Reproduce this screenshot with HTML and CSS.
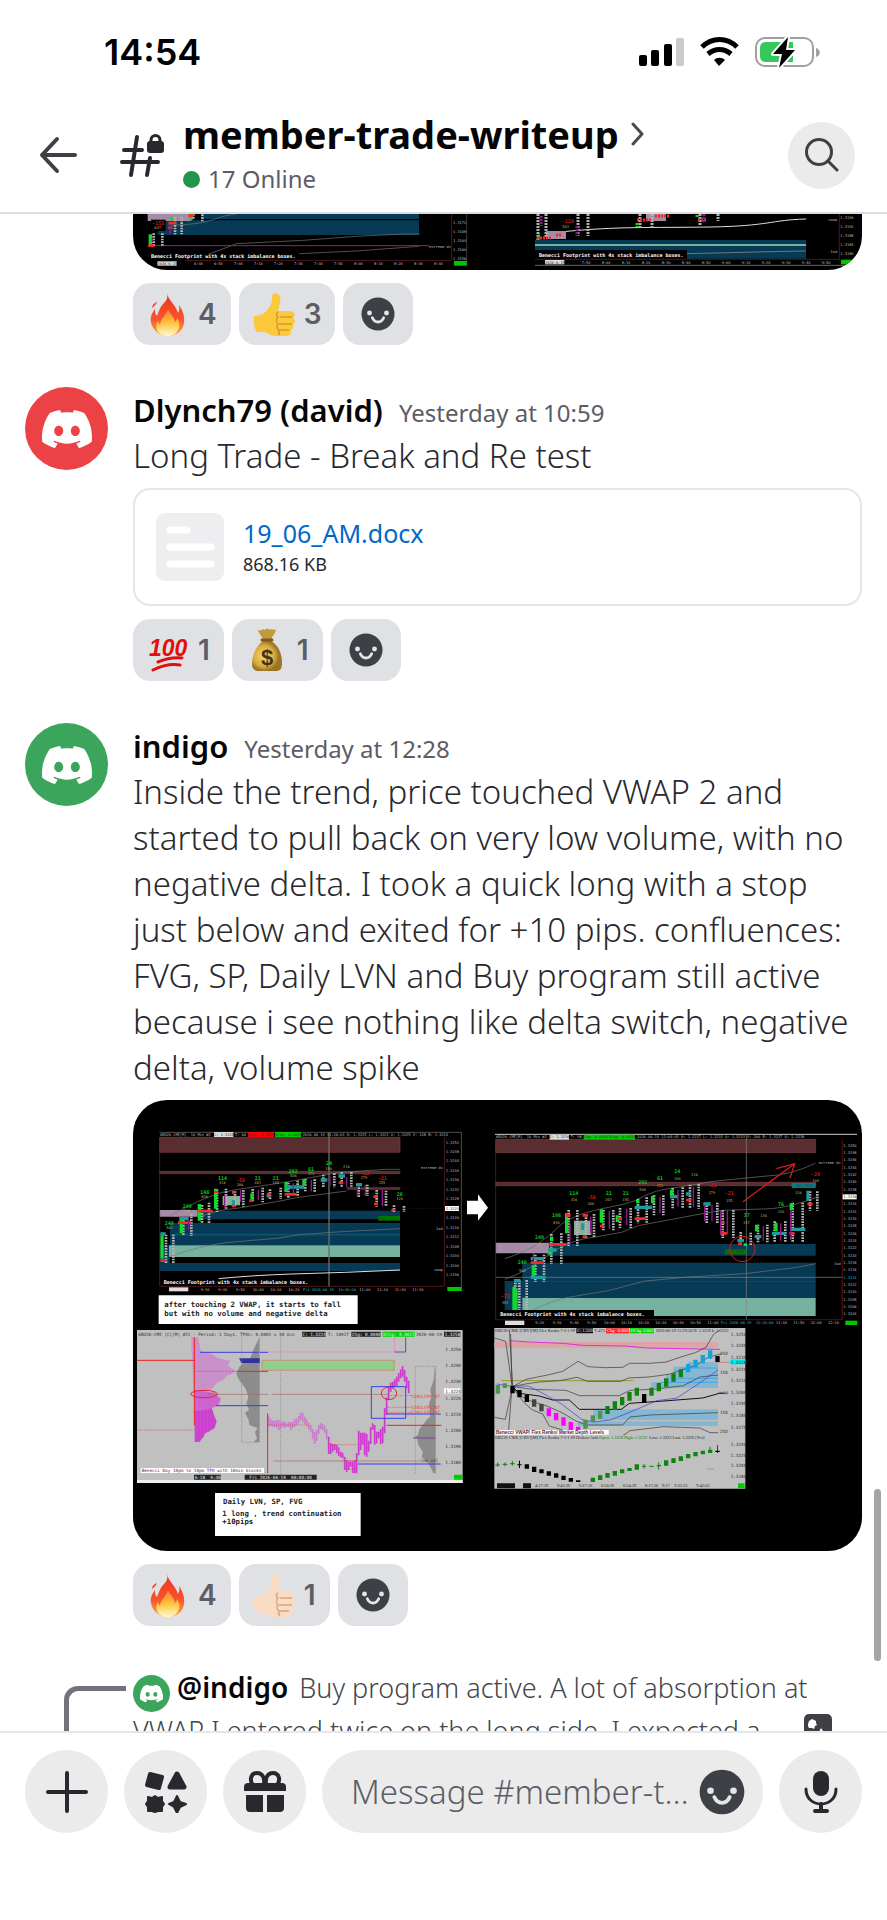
FILE: index.html
```html
<!DOCTYPE html>
<html lang="en">
<head>
    <meta charset="UTF-8">
    <meta name="viewport" content="width=device-width, initial-scale=1.0">
    <title>member-trade-writeup</title>
    <link rel="stylesheet" href="styles.css">
</head>
<body>
    <!-- shared icons -->
    <svg class="sprite" aria-hidden="true">
        <symbol id="discord" viewBox="0 0 24 24">
            <path fill="#fff" d="M20.317 4.3698a19.7913 19.7913 0 00-4.8851-1.5152.0741.0741 0 00-.0785.0371c-.211.3753-.4447.8648-.6083 1.2495-1.8447-.2762-3.68-.2762-5.4868 0-.1636-.3933-.4058-.8742-.6177-1.2495a.077.077 0 00-.0785-.037 19.7363 19.7363 0 00-4.8852 1.515.0699.0699 0 00-.0321.0277C.5334 9.0458-.319 13.5799.0992 18.0578a.0824.0824 0 00.0312.0561c2.0528 1.5076 4.0413 2.4228 5.9929 3.0294a.0777.0777 0 00.0842-.0276c.4616-.6304.8731-1.2952 1.226-1.9942a.076.076 0 00-.0416-.1057c-.6528-.2476-1.2743-.5495-1.8722-.8923a.077.077 0 01-.0076-.1277c.1258-.0943.2517-.1923.3718-.2914a.0743.0743 0 01.0776-.0105c3.9278 1.7933 8.18 1.7933 12.0614 0a.0739.0739 0 01.0785.0095c.1202.099.246.1981.3728.2924a.077.077 0 01-.0066.1276 12.2986 12.2986 0 01-1.873.8914.0766.0766 0 00-.0407.1067c.3604.698.7719 1.3628 1.225 1.9932a.076.076 0 00.0842.0286c1.961-.6067 3.9495-1.5219 6.0023-3.0294a.077.077 0 00.0313-.0552c.5004-5.177-.8382-9.6739-3.5485-13.6604a.061.061 0 00-.0312-.0286zM8.02 15.3312c-1.1825 0-2.1569-1.0857-2.1569-2.419 0-1.3332.9555-2.4189 2.157-2.4189 1.2108 0 2.1757 1.0952 2.1568 2.419 0 1.3332-.9555 2.4189-2.1569 2.4189zm7.9748 0c-1.1825 0-2.1569-1.0857-2.1569-2.419 0-1.3332.9554-2.4189 2.1569-2.4189 1.2108 0 2.1757 1.0952 2.1568 2.419 0 1.3332-.946 2.4189-2.1568 2.4189Z"/>
        </symbol>
        <symbol id="smile" viewBox="0 0 36 36">
            <circle cx="18" cy="18" r="17.5" fill="#3f4046"/>
            <circle cx="9" cy="17" r="2.6" fill="#e4e5e8"/>
            <circle cx="27" cy="17" r="2.6" fill="#e4e5e8"/>
            <path d="M12 22c2.500 6 9.500 6 12 0" fill="none" stroke="#e4e5e8" stroke-width="3" stroke-linecap="round"/>
        </symbol>
        <symbol id="fire" viewBox="0 0 42 44">
            <linearGradient id="flame" x1="0" y1="0" x2="0" y2="1">
                <stop offset="0" stop-color="#f1331f"/>
                <stop offset=".6" stop-color="#f9532c"/>
                <stop offset="1" stop-color="#fdae3d"/>
            </linearGradient>
            <linearGradient id="core" x1="0" y1="0" x2="0" y2="1">
                <stop offset="0" stop-color="#fb7a35"/>
                <stop offset=".5" stop-color="#ffc23b"/>
                <stop offset="1" stop-color="#fffbd0"/>
            </linearGradient>
            <path fill="url(#flame)" d="M20 1c1 7 9 12 11 20 1-2 2-4 1-8 4 6 6 12 5 18-1 8-8 13-16 13S5 38 4 30c-1-5 1-9 4-13 0 3 0 5 2 7 2-5 3-9 7-13 3-3 4-6 3-10z"/>
            <path fill="#f4452a" d="M5 16c0-3 2-5 5-6-1 3-3 4-5 6z"/>
            <path fill="url(#core)" d="M21 17c2 5 6 7 7 13 1-1 2-2 2-4 3 4 3 9 1 12-2 4-6 6-10 6-5 0-9-2-11-6-1-3-1-6 1-9 1 2 1 3 2 4 1-7 6-9 8-16z"/>
        </symbol>
        <symbol id="thumb" viewBox="0 0 42 44">
            <path fill="currentColor" d="M1 24c5 0 10-2 13-6 3-3 5-6 5-11 0-4 1-6 3-6 5 0 6 5 5 10l-2 8h12c5 0 6 5 3 7 3 2 2 5 0 6 1 3 0 5-2 6 1 3-1 6-4 6H22c-5 0-7-4-12-4H4c-3-4-4-11-3-16z"/>
            <path d="M27 25h12M26 32h13M26 38h10M25 20c-2 1-2 4 0 5-2 2-2 5 0 7-2 2-1 5 1 6-1 2 0 4 1 5" fill="none" stroke="#8a4b10" stroke-opacity=".35" stroke-width="1.500"/>
        </symbol>
    </svg>

    <header class="top">
        <div class="status">
            <span class="clock">14:54</span>
            <svg class="status-icons" viewBox="639 36 182 32" role="img" aria-label="Signal, Wi-Fi, battery charging">
                <rect x="639" y="55" width="8" height="11" rx="2"/>
                <rect x="651" y="50" width="8" height="16" rx="2"/>
                <rect x="664" y="44" width="8" height="22" rx="2"/>
                <rect x="676" y="38" width="8" height="28" rx="2" fill="#ccc"/>
                <g fill="none" stroke="#000" stroke-width="5">
                    <path d="M702 47c10-10 25-10 35 0"/>
                    <path d="M708 54c7-6 16-6 23 0"/>
                </g>
                <path d="M714 60c3-3 8-3 11 0l-6 6z"/>
                <rect x="756" y="38" width="57" height="28" rx="9" fill="none" stroke="#a0a0a0" stroke-width="2"/>
                <path d="M816 48c5 1 5 8 0 9z" fill="#a0a0a0"/>
                <path d="M766 42h27v20h-27q-6 0-6-6v-8q0-6 6-6z" fill="#34c759"/>
                <path d="M788 37l-15 17h9l-3 14 16-18h-9z" stroke="#fff" stroke-width="4" stroke-linejoin="round"/>
                <path d="M788 37l-15 17h9l-3 14 16-18h-9z"/>
            </svg>
        </div>
        <div class="channel-bar">
            <button class="back" aria-label="Back">
                <svg viewBox="0 0 40 40"><path d="M37 20H4M19 4L4 20l15 16" fill="none" stroke="#3f4046" stroke-width="4" stroke-linecap="round" stroke-linejoin="round"/></svg>
            </button>
            <svg class="hash" viewBox="120 132 46 46" aria-hidden="true">
                <path d="M137 137l-6 38M150 158l-3 17M124 150h18M122 162h36" fill="none" stroke="#28292e" stroke-width="4" stroke-linecap="round"/>
                <rect x="147" y="141" width="17" height="12" rx="3" fill="#28292e"/>
                <path d="M151 142v-2c0-6 9-6 9 0v2" fill="none" stroke="#28292e" stroke-width="3"/>
            </svg>
            <div class="channel">
                <h1>member-trade-writeup
                    <svg viewBox="0 0 14 24" aria-hidden="true"><path d="M2 2l9 10-9 10" fill="none" stroke="#4a4b52" stroke-width="3" stroke-linecap="round" stroke-linejoin="round"/></svg>
                </h1>
                <p class="online"><span class="dot"></span>17 Online</p>
            </div>
            <button class="search" aria-label="Search">
                <svg viewBox="0 0 34 34"><circle cx="14" cy="14" r="12.500" fill="none" stroke="#3f4046" stroke-width="3"/><path d="M23 23l9 9" stroke="#3f4046" stroke-width="3" stroke-linecap="round"/></svg>
            </button>
        </div>
    </header>

    <main class="chat">
        <article class="message">
            <div class="body">
                <svg class="shot shot-cut" viewBox="133 214 729 56" role="img" aria-label="Footprint charts">
                    <rect x="133" y="214" width="729" height="56"/>
                    <svg x="125" y="205" width="380" height="150" viewBox="0 0 1140 450">
                        <path fill="#063a55" d="M230 0h652v42H230zM98 46h784v44H98z"/>
                        <path fill="#a58ba5" d="M68 20h130v28H68z"/>
                        <path class="wire" d="M130 60q90 0 130-15t80-20h200M250 148l85-32 200-10 160-12 140-7h48M522 146l170-8 190-14"/>
                        <path stroke="#a014a0" stroke-width="3" d="M68 122h844"/>
                        <path stroke="#7a2020" stroke-width="2" fill="none" d="M180 166h800V20"/>
                        <path stroke="#555" stroke-width="2" d="M1025 20v164"/>
                        <path class="digits" d="M86 85v40M112 85v40M150 36v52M170 36v52M205 20v24M232 20v30"/>
                        <path class="c-green" d="M140 36v10M198 28v18M76 88v36"/>
                        <path class="c-red" d="M130 54h24M130 68h12M190 32h16M70 122h18"/>
                        <path class="c-mag" d="M136 64v24M82 100v10"/>
                        <rect x="78" y="44" width="44" height="34"/>
                        <text class="t-red" x="82" y="60">-155</text>
                        <text class="t-yel" x="88" y="73">647</text>
                        <text class="caption" x="78" y="160">Benecci Footprint with 4x stack imbalance boxes.</text>
                        <rect x="97" y="169" width="58" height="13" fill="#ddd"/>
                        <text class="tick dark" x="97" y="180">2026-6-19</text>
                        <text class="tick"><tspan x="207" y="180">6:40</tspan><tspan x="267">6:50</tspan><tspan x="327">7:00</tspan><tspan x="387">7:10</tspan><tspan x="447">7:20</tspan><tspan x="507">7:30</tspan><tspan x="567">7:40</tspan><tspan x="627">7:50</tspan><tspan x="687">8:00</tspan><tspan x="747">8:10</tspan><tspan x="807">8:20</tspan><tspan x="867">8:30</tspan><tspan x="927">8:40</tspan></text>
                        <text class="tick"><tspan x="984" y="58">1.3172</tspan><tspan x="984" dy="27">1.3168</tspan><tspan x="984" dy="27">1.3164</tspan><tspan x="984" dy="27">1.3160</tspan><tspan x="984" dy="27">1.3156</tspan><tspan x="912" y="128">extreme dv</tspan></text>
                        <rect x="987" y="168" width="38" height="14" fill="#00c800"/>
                    </svg>
                    <path fill="#063a55" d="M535 240h271v18.700H535z"/>
                    <path fill="#76b2a0" d="M535 244h271v2H535z"/>
                    <path fill="none" stroke="#ddd" d="M560 232c60-6 90-4 150-5s60-7 96-8"/>
                    <path class="wire thin" d="M640 254c60 0 100-2 166-3"/>
                    <path fill="#a58ba5" d="M546 231h20v8h-20zM646 214h20v7h-20z"/>
                    <path class="digits small" d="M538 214v26M546 214v24M578 214v22M588 214v22M640 214v14M652 214v14M700 214v11M718 214v7"/>
                    <path class="c-red small" d="M537 238h14M556 235h6M637 220h14M655 216h14M698 220h8"/>
                    <path class="c-mag small" d="M541 216v10M577 226v10M704 214v9"/>
                    <path class="c-green small" d="M538 236h3M637 223v4M697 215v2"/>
                    <rect x="535" y="250" width="152" height="9"/>
                    <svg x="535" y="214" width="327" height="56" viewBox="0 0 981 168">
                        <text class="caption" x="12" y="130">Benecci Footprint with 4x stack imbalance boxes.</text>
                        <text class="t-red" x="80" y="28">-119</text>
                        <text class="t-yel" x="82" y="42">563</text>
                        <path stroke="#7a2020" stroke-width="2" fill="none" d="M0 136h913V0"/>
                        <path stroke="#999" stroke-width="2" d="M0 154h960"/>
                        <rect x="30" y="138" width="58" height="13" fill="#ddd"/>
                        <text class="tick dark" x="30" y="149">2026-6-19</text>
                        <text class="tick"><tspan x="140" y="149">7:50</tspan><tspan x="200">8:00</tspan><tspan x="260">8:10</tspan><tspan x="320">8:20</tspan><tspan x="380">8:30</tspan><tspan x="440">8:40</tspan><tspan x="500">8:50</tspan><tspan x="560">9:00</tspan><tspan x="620">9:10</tspan><tspan x="680">9:20</tspan><tspan x="740">9:30</tspan><tspan x="800">9:40</tspan><tspan x="860">9:50</tspan></text>
                        <text class="tick"><tspan x="916" y="14">1.3196</tspan><tspan x="916" dy="27">1.3192</tspan><tspan x="916" dy="27">1.3188</tspan><tspan x="916" dy="27">1.3184</tspan><tspan x="916" dy="27">1.3180</tspan><tspan x="880" y="22">vwap</tspan><tspan x="880" y="118">-1sd</tspan></text>
                        <rect x="918" y="137" width="40" height="14" fill="#00c800"/>
                    </svg>
                </svg>
                <div class="reactions">
                    <button class="reaction"><svg><use href="#fire"/></svg>4</button>
                    <button class="reaction"><svg class="yellow"><use href="#thumb"/></svg>3</button>
                    <button class="reaction add" aria-label="Add reaction"><svg><use href="#smile"/></svg></button>
                </div>
            </div>
        </article>

        <article class="message">
            <div class="avatar red"><svg><use href="#discord"/></svg></div>
            <div class="body">
                <h2>Dlynch79 (david) <time>Yesterday at 10:59</time></h2>
                <p>Long Trade - Break and Re test</p>
                <div class="file">
                    <svg viewBox="0 0 68 68" aria-hidden="true"><rect width="68" height="68" rx="9" fill="#eeeef0"/><path d="M14 17h17M14 34h41M14 51h41" stroke="#fff" stroke-width="7" stroke-linecap="round"/></svg>
                    <div>
                        <a href="#">19_06_AM.docx</a>
                        <span>868.16 KB</span>
                    </div>
                </div>
                <div class="reactions">
                    <button class="reaction">
                        <svg viewBox="0 0 42 44" role="img" aria-label="Hundred points">
                            <text class="hundred-digits" x="2" y="28">100</text>
                            <path d="M11 34q12-5 24-4M6 42q14-7 27-5" fill="none" stroke="#e0100c" stroke-width="3" stroke-linecap="round"/>
                        </svg>1
                    </button>
                    <button class="reaction">
                        <svg viewBox="0 0 42 44" role="img" aria-label="Money bag">
                            <radialGradient id="sack" cx=".4" cy=".5">
                                <stop offset="0" stop-color="#f8d866"/>
                                <stop offset=".7" stop-color="#d8ac3c"/>
                                <stop offset="1" stop-color="#9a7526"/>
                            </radialGradient>
                            <path fill="#c39a3b" d="M12 2c2 0 4 1 5-1 2 1 3 1 4-1 2 2 3 2 4 1 1 1 3 0 5 1-1 4-4 6-5 10h-8c-1-4-4-6-5-10z"/>
                            <path fill="url(#sack)" d="M17 13h8c7 4 11 12 11 22 0 6-2 8-6 8H13c-4 0-7-2-7-7 0-10 5-19 11-23z"/>
                            <path d="M16 12h10" stroke="#7d5b1c" stroke-width="3" stroke-linecap="round"/>
                            <text class="bag-sign" x="21" y="37">$</text>
                        </svg>1
                    </button>
                    <button class="reaction add" aria-label="Add reaction"><svg><use href="#smile"/></svg></button>
                </div>
            </div>
        </article>

        <article class="message">
            <div class="avatar green"><svg><use href="#discord"/></svg></div>
            <div class="body">
                <h2>indigo <time>Yesterday at 12:28</time></h2>
                <p>Inside the trend, price touched VWAP 2 and started to pull back on very low volume, with no negative delta. I took a quick long with a stop just below and exited for +10 pips. confluences: FVG, SP, Daily LVN and Buy program still active because i see nothing like delta switch, negative delta, volume spike</p>
                <svg class="shot" viewBox="0 0 729 451" role="img" aria-label="Trade charts with notes">
                    <rect width="729" height="451"/>

                    <!-- footprint before the entry -->
                    <svg x="-13" y="-10" width="380" height="240" viewBox="0 0 1140 720">
                        <path stroke="#777" stroke-width="2" fill="none" d="M118 127h906v478"/>
                        <path fill="#5a2d30" stroke="#7c3f42" stroke-width="2" d="M119 142h721v45H119zM119 244h721v7H119zM682 293h158v5H682z"/>
                        <path fill="#063a55" d="M235 362h605v26H235zM150 399h690v67H150zM119 519h721v24H119zM119 466h30v53h-30z"/>
                        <path stroke="#0d5174" stroke-width="5" d="M150 434h690"/>
                        <path fill="#76b2a0" d="M147 466h693v35H147z"/>
                        <path fill="#a58ba5" d="M119 360h114v20H119z"/>
                        <path fill="#8ab09a" d="M308 318h52v28h-52z"/>
                        <path stroke="#6c6c6c" stroke-width="4" d="M627 127v462"/>
                        <path class="wire" d="M148 378q60-32 105-52t95-27l120-18 60-10 120-22 90-7 60-4h42M148 500q90-32 170-42l160-14 60-10 110-8 192-10M240 380q50-20 110-25l120-20 60-12 150-20"/>
                        <path stroke="#ddd" stroke-width="3" fill="none" d="M296 566q100-10 220-14l160-5 164-7"/>
                        <path class="digits" d="M138 434v88M160 434v88M190 390v46M214 372v66M246 345v55M267 338v62M291 298v68M318 296v60M345 304v48M370 300v50M398 297v40M428 293v44M450 298v32M482 293v34M505 278v46M533 272v48M556 267v40M584 268v38M610 254v38M643 250v42M665 246v44M694 246v44M716 284v38M742 284v34M770 300v50M798 302v46M822 346v20M852 348v18"/>
                        <path class="c-green" d="M126 436v70M184 384v46M238 342v50M287 296v60M396 310v22M498 276v30M552 268v20"/>
                        <path class="c-cyan" d="M121 432h16M178 386h28M340 330v20M445 310v12M495 291h58M602 270h20M655 258h20M708 284h18"/>
                        <path class="c-red" d="M121 512h16M174 398h40M234 363h44M282 306h12M336 307h10M336 348h10M388 332h10M442 312h10M494 313h36M656 278h14M760 320h12M762 342h12M814 360h12"/>
                        <path class="c-mag" d="M206 390v30M314 312v40M362 300v36M415 300v30M520 280v30M574 270v34M630 260v28M680 262v30M712 290v30M736 284v34M787 298v50"/>
                        <g class="t-grn"><text x="134" y="404">240</text><text x="188" y="354">249</text><text x="241" y="312">196</text><text x="294" y="269">114</text><text x="404" y="269">21</text><text x="458" y="269">21</text><text x="506" y="248">292</text><text x="564" y="242">61</text><text x="618" y="226">24</text><text x="830" y="318">26</text></g>
                        <g class="t-red"><text x="348" y="276">-56</text><text x="720" y="254">-21</text><text x="773" y="269">-21</text></g>
                        <g class="t-yel"><text x="138" y="417">562</text><text x="191" y="367">901</text><text x="244" y="325">836</text><text x="297" y="282">416</text><text x="350" y="289">206</text><text x="403" y="282">263</text><text x="457" y="282">195</text><text x="510" y="261">506</text><text x="563" y="254">173</text><text x="616" y="240">190</text><text x="669" y="233">216</text><text x="722" y="268">179</text><text x="776" y="282">155</text><text x="829" y="331">120</text></g>
                        <rect x="775" y="378" width="65" height="14" fill="#007a00"/>
                        <text class="tick dark" x="778" y="390">1@1.3223</text>
                        <path stroke="#555" stroke-dasharray="3 4" d="M860 355h112"/>
                        <rect x="282" y="126" width="58" height="15" fill="#ddd"/><rect x="384" y="126" width="78" height="15" fill="#f00"/><rect x="465" y="126" width="78" height="15" fill="#0c0"/>
                        <text class="tick" y="137"><tspan x="120">6BU26-CME[M]  10 Min #2</tspan><tspan x="345">T: 66</tspan><tspan x="548">2026-06-19 11:26:03 H: 1.3225 L: 1.3223 O: 1.3225 V: 128 B: 1.3224</tspan></text>
                        <text class="tick dark" y="137"><tspan x="282">C: 1.3224</tspan><tspan x="384">Chg: -0.0001</tspan><tspan x="465">DChg: 0.0022</tspan></text>
                        <path stroke="#7a2020" stroke-width="2" fill="none" d="M119 589h854V142M119 142v447"/>
                        <text class="tick"><tspan x="977" y="161">1.3252</tspan><tspan x="977" dy="28">1.3248</tspan><tspan x="977" dy="28">1.3244</tspan><tspan x="977" dy="29">1.3240</tspan><tspan x="977" dy="28">1.3236</tspan><tspan x="977" dy="28">1.3232</tspan><tspan x="977" dy="29">1.3228</tspan><tspan x="977" dy="57">1.3220</tspan><tspan x="977" dy="28">1.3216</tspan><tspan x="977" dy="29">1.3212</tspan><tspan x="977" dy="28">1.3208</tspan><tspan x="977" dy="28">1.3204</tspan><tspan x="977" dy="29">1.3200</tspan><tspan x="977" dy="28">1.3196</tspan><tspan x="903" y="238">extreme dv</tspan><tspan x="948" y="421">1sd</tspan><tspan x="942" y="544">vwap</tspan></text>
                        <rect x="975" y="348" width="42" height="15" fill="#fff"/>
                        <text class="tick dark" x="977" y="359">1.3224</text>
                        <text class="caption" x="131" y="581">Benecci Footprint with 4x stack imbalance boxes.</text>
                        <rect x="147" y="592" width="58" height="12" fill="#ddd"/>
                        <text class="tick" y="602"><tspan x="242">9:30</tspan><tspan x="295">9:40</tspan><tspan x="348">9:50</tspan><tspan x="398">10:00</tspan><tspan x="451">10:10</tspan><tspan x="505">10:20</tspan><tspan x="718">11:00</tspan><tspan x="771">11:10</tspan><tspan x="824">11:20</tspan><tspan x="877">11:30</tspan></text>
                        <text class="tick cyan" x="549" y="602">Fri 2026-06-19  10:40:00</text>
                        <rect x="982" y="591" width="42" height="12" fill="#00c800"/>
                        <path fill="#fff" d="M1041 332h33v-19l30 40-30 39v-19h-33z"/>
                        <path fill="#fff" d="M116 616h597v86H116z"/>
                        <text class="note"><tspan x="133" y="651">after touching 2 VWAP, it starts to fall</tspan><tspan x="133" y="677">but with no volume and negative delta</tspan></text>
                    </svg>

                    <!-- footprint after the entry -->
                    <svg x="347" y="-10" width="390" height="240" viewBox="0 0 1170 720">
                        <path stroke="#ccc" stroke-width="3" d="M45 133h1086"/>
                        <path fill="#5a2d30" stroke="#7c3f42" stroke-width="2" d="M47 148h960v40H47zM47 277h960v10H47z"/>
                        <path fill="#063a55" d="M200 462h807v35H200zM127 518h880v104H127zM74 573h60v112H74z"/>
                        <path stroke="#0d5174" stroke-width="2" d="M127 574h880"/>
                        <path fill="#76b2a0" d="M127 623h880v55H127z"/>
                        <path fill="#a58ba5" d="M47 458h160v32H47z"/>
                        <path fill="#8ab09a" d="M282 392h52v43h-52z"/>
                        <path stroke="#888" stroke-width="2" d="M799 133v556M47 562h1040"/>
                        <path class="wire" d="M75 506q60-20 95-42t75-62q40-32 150-52 60-10 95-30t90-26l120-20 160-16q70-2 146-38M75 568q80-30 140-80 60-40 130-47l80-14 50-20 170-32 80-14 150-5q60-6 133-33M160 660q60-30 105-38l120-20 110-29 130-12 170-10 150-18 62-12"/>
                        <path class="digits" d="M106 570v118M118 570v118M140 570v118M166 494v82M192 494v82M214 432v90M244 430v92M266 360v108M292 360v108M318 374v70M342 372v70M370 360v64M400 360v64M420 354v60M452 354v60M474 326v74M500 322v76M522 316v60M550 316v60M578 294v62M608 292v64M630 284v72M656 282v74M680 338v62M712 338v62M728 360v84M760 360v84M782 426v40M812 428v38M834 404v54M862 404v54M884 394v64M916 394v64M938 338v120M968 338v120M990 304v58M1012 304v58"/>
                        <path class="c-green" d="M102 590v94M108 596v70M160 526v36M215 440v14M210 474v20M260 370v60M364 358v40M412 376v20M473 330v10M518 318v22M575 300v24M830 404v20M888 398v26M934 340v20M796 460v8"/>
                        <path class="c-cyan" d="M102 572h20M152 506h40M152 562h44M204 480h26M308 400v20M464 352h52M570 320h24M618 312h14M670 342h22M772 452h20M824 440h20M876 430h40M930 418h46M984 302v30"/>
                        <path class="c-red" d="M152 518h40M206 463h54M258 376h14M308 376h16M308 440h12M360 408h12M412 386h14M464 386h34M618 330h16M722 398h12M722 430h20M774 462h10M928 430h16M982 342h16"/>
                        <path class="c-mag" d="M160 490v20M270 400v60M332 380v50M388 362v56M440 356v50M540 320v50M594 300v50M640 290v60M674 344v50M696 344v50M722 362v72M742 362v70M850 408v44M902 400v52M932 360v90"/>
                        <g class="t-grn"><text x="113" y="523">240</text><text x="165" y="446">249</text><text x="216" y="381">196</text><text x="268" y="314">114</text><text x="377" y="314">21</text><text x="428" y="314">21</text><text x="475" y="281">292</text><text x="531" y="270">61</text><text x="583" y="248">24</text><text x="791" y="381">37</text><text x="894" y="347">76</text></g>
                        <g class="t-red"><text x="62" y="623">-73</text><text x="320" y="326">-56</text><text x="682" y="292">-21</text><text x="734" y="315">-21</text><text x="993" y="259">-20</text></g>
                        <g class="t-yel"><text x="65" y="643">393</text><text x="117" y="545">562</text><text x="166" y="468">901</text><text x="219" y="401">836</text><text x="272" y="334">416</text><text x="323" y="346">206</text><text x="375" y="334">263</text><text x="427" y="334">195</text><text x="478" y="303">506</text><text x="530" y="291">173</text><text x="582" y="269">190</text><text x="634" y="258">216</text><text x="686" y="313">179</text><text x="738" y="335">155</text><text x="789" y="401">157</text><text x="841" y="380">136</text><text x="893" y="368">110</text><text x="945" y="313">126</text><text x="997" y="275">100</text></g>
                        <rect x="736" y="478" width="64" height="15" fill="#007a00"/>
                        <text class="tick dark" x="740" y="490">1@1.3223</text>
                        <rect x="935" y="279" width="72" height="15" fill="#077f86"/>
                        <text class="tick dark" x="940" y="291">-1@1.3233</text>
                        <circle cx="787" cy="477" r="38" fill="none" stroke="#d01c24" stroke-width="3"/>
                        <path d="M789 335L944 221M889 236l55-15-14 43" fill="none" stroke="#d01c24" stroke-width="4"/>
                        <rect x="209" y="134" width="58" height="15" fill="#ddd"/><rect x="311" y="134" width="154" height="15" fill="#0c0"/>
                        <text class="tick" y="145"><tspan x="48">6BU26-CME[M]  10 Min #2</tspan><tspan x="272">T: 98</tspan><tspan x="471">2026-06-19 12:04:03 H: 1.3237 L: 1.3232 O: 1.3233 V: 200 B: 1.3237 A: 1.3238</tspan></text>
                        <text class="tick dark" y="145"><tspan x="209">C: 1.3236</tspan><tspan x="311">Chg: 0.0003</tspan><tspan x="386">DChg: 0.0034</tspan></text>
                        <path stroke="#7a2020" stroke-width="2" fill="none" d="M47 689h1040V148M47 148v541"/>
                        <text class="tick"><tspan x="1090" y="170">1.3250</tspan><tspan x="1090" dy="22">1.3248</tspan><tspan x="1090" dy="22">1.3246</tspan><tspan x="1090" dy="22">1.3244</tspan><tspan x="1090" dy="22">1.3242</tspan><tspan x="1090" dy="22">1.3240</tspan><tspan x="1090" dy="22">1.3238</tspan><tspan x="1090" dy="44">1.3234</tspan><tspan x="1090" dy="22">1.3232</tspan><tspan x="1090" dy="22">1.3230</tspan><tspan x="1090" dy="22">1.3228</tspan><tspan x="1090" dy="22">1.3226</tspan><tspan x="1090" dy="22">1.3224</tspan><tspan x="1090" dy="22">1.3222</tspan><tspan x="1090" dy="22">1.3220</tspan><tspan x="1090" dy="22">1.3218</tspan><tspan x="1090" dy="22">1.3216</tspan><tspan x="1090" dy="44">1.3212</tspan><tspan x="1090" dy="22">1.3210</tspan><tspan x="1090" dy="22">1.3208</tspan><tspan x="1090" dy="22">1.3206</tspan><tspan x="1090" dy="22">1.3204</tspan><tspan x="1016" y="223">extreme dv</tspan><tspan x="1062" y="524">1sd</tspan></text>
                        <text class="tick cyan" x="1090" y="566">1.3214</text>
                        <rect x="1088" y="313" width="42" height="15" fill="#fff"/>
                        <text class="tick dark" x="1090" y="324">1.3236</text>
                        <rect x="54" y="660" width="468" height="28"/>
                        <text class="caption" x="61" y="678">Benecci Footprint with 4x stack imbalance boxes.</text>
                        <rect x="75" y="692" width="58" height="13" fill="#ddd"/>
                        <text class="tick" y="703"><tspan x="166">9:20</tspan><tspan x="218">9:30</tspan><tspan x="270">9:40</tspan><tspan x="322">9:50</tspan><tspan x="372">10:00</tspan><tspan x="423">10:10</tspan><tspan x="474">10:20</tspan><tspan x="526">10:30</tspan><tspan x="578">10:40</tspan><tspan x="630">10:50</tspan><tspan x="682">11:00</tspan><tspan x="888">11:40</tspan><tspan x="940">11:50</tspan><tspan x="992">12:00</tspan><tspan x="1044">12:10</tspan></text>
                        <text class="tick cyan" x="722" y="703">Fri 2026-06-19  11:20:00</text>
                        <rect x="1096" y="692" width="36" height="13" fill="#00c800"/>
                    </svg>

                    <!-- day profile -->
                    <svg x="-13" y="210" width="380" height="250" viewBox="0 0 1140 750">
                        <path fill="#c0c0c0" d="M51 60h977v459H51z"/>
                        <path fill="#eee" d="M51 510h977v9H51z"/>
                        <path fill="#c98fca" d="M214 82h20l8 40 38 12 12 10 38 8-6 16 26 16-30 14-6 8-24 14-18 20-18 8 14 12 36 4-8 20-20 10-28 10H224z"/>
                        <path fill="#cd3fd0" d="M224 300l50-10 10 30 6 14-6 20-16 10-12 6-6 12-12 14h-14z"/>
                        <path fill="#cc62cf" d="M224 240l60 8 18 20-8 18-26 12-44 6z"/>
                        <path stroke="#c0c0c0" stroke-opacity=".5" stroke-width="2" stroke-dasharray="2 5" d="M232 84v310M242 84v310M252 100v280M262 120v250M272 130v230M282 134v210M292 140v146M302 144v130M312 146v60M322 150v60"/>
                        <path fill="#8c8c8c" d="M419 82v314h-18l10-10-6-20 8-12-24-8-4-18-10-20 12-8-8-20 6-20-8-24-18-24-10-20 8-20 10-10 24-18 10-26 12-24zM947 170v320h-6l-16-30-20-20 4-14-14-20-4-22-12 0 14-8 6-20 24-30 8-6-4-40 8-20-4-20 10-30 4-40z"/>
                        <path fill="#32329b" d="M357 145h62v14h-55z"/>
                        <path fill="none" stroke="#888" stroke-width="2" stroke-dasharray="4 3" d="M365 82v315h54M482 82v410M886 490V169h60v320"/>
                        <path fill="#8fce8f" stroke="#d87a60" stroke-width="2" d="M426 151h397v30H426z"/>
                        <path fill="none" stroke="#e58fc4" stroke-width="3" d="M444 126h380V82M216 82v45"/>
                        <path fill="none" stroke="#7c3f9c" stroke-width="3" d="M824 126h33V82M880 384h68"/>
                        <path class="tpo-pale" d="M446 318v32M452 328v20M458 332v18M464 332v20M470 330v22M476 330v30M482 336v20M488 334v18M494 335v20M500 340v10M506 335v17M512 336v24M518 336v19M524 328v22M530 326v19M536 318v22M542 310v20M548 308v27M554 320v22M560 328v20M566 338v20M572 345v20M578 358v30M584 365v37M590 360v32M596 345v27M602 338v20M608 342v18M614 348v20M620 358v30"/>
                        <path class="tpo" d="M626 380v52M632 400v32M638 402v23M644 402v18M650 405v25M656 412v26M662 425v17M668 428v17M674 440v40M680 450v36M686 455v25M692 455v15M698 455v34M704 450v40M710 430v60M716 362v74M722 368v52M728 368v36M734 368v68M740 372v68M746 392v33M752 352v50M758 340v20M764 345v59M770 365v35M776 365v20M782 358v44M788 350v50M794 295v75M800 262v53M806 228v42M812 218v27M818 215v20M824 208v22M830 200v28M836 190v25M842 178v27M848 168v32M854 180v35M860 200v35M866 212v38"/>
                        <path fill="none" stroke="#3b3bea" stroke-width="3" d="M240 127h204M288 287h156M714 462h248M800 312h162M754 230h103v95H754z"/>
                        <path fill="none" stroke="#f21f1f" stroke-width="3" d="M51 151h172M223 82v265M350 184h94M443 310v180M800 346h164"/>
                        <path fill="none" stroke="#f04040" stroke-width="2" stroke-dasharray="4 3" d="M51 360h172M628 404h84M668 452h44M676 477h32M805 257h72M802 292h72M800 307h76M446 345h120M224 184h126"/>
                        <path fill="none" stroke="#b06060" stroke-width="2" d="M262 253h182M455 253h350M460 453h440"/>
                        <path fill="none" stroke="#e3263a" stroke-width="3" d="M212 252a40 11 0 1 0 80 0a40 11 0 1 0-80 0M784 250a23 19 0 1 0 46 0a23 19 0 1 0-46 0"/>
                        <path stroke="#f0954a" stroke-width="3" stroke-dasharray="6 8" d="M418 82v60M418 355v42M947 170v320"/>
                        <g class="t-single"><text x="874" y="263">SINGLEPRINT</text><text x="874" y="297">SINGLEPRINT</text><text x="874" y="312">SINGLEPRINT</text></g>
                        <text class="axis"><tspan x="976" y="123">1.3250</tspan><tspan x="976" dy="48">1.3240</tspan><tspan x="976" dy="48">1.3230</tspan><tspan x="976" dy="50">1.3220</tspan><tspan x="976" dy="49">1.3210</tspan><tspan x="976" dy="48">1.3200</tspan><tspan x="976" dy="49">1.3190</tspan><tspan x="976" dy="48">1.3180</tspan></text>
                        <rect x="972" y="235" width="50" height="15" fill="#fff"/>
                        <text class="axis" x="976" y="248">1.3224</text>
                        <text class="axis" x="900" y="457">low vol</text>
                        <path fill="#222" d="M546 65h71v15h-71zM694 65h88v15h-88zM972 65h49v15h-49zM222 494h80v15h-80zM374 494h216v15H374z"/>
                        <path fill="#00d000" d="M788 65h96v15h-96zM1002 494h25v15h-25z"/>
                        <text class="axis"><tspan x="55" y="77">6BU26-CME [C][M] #21 - Period: 1 Days, TPOs: 0.0001 x 30 min</tspan><tspan x="624">T: 10927</tspan><tspan x="888">2026-06-19</tspan></text>
                        <text class="axis light"><tspan x="547" y="77">C: 1.3224</tspan><tspan x="696">Chg: 0.0000</tspan><tspan x="790">DChg: 0.0021</tspan><tspan x="974">1.3258</tspan><tspan x="224" y="506">6-18  9:40</tspan><tspan x="388">Fri 2026-06-19  00:00:00</tspan></text>
                        <path fill="#fff" d="M62 474h370v15H62z"/>
                        <text class="axis plum" x="65" y="486">Benecci Day 10pm to 10pm TPO with 10min blocks</text>
                        <path fill="#fff" d="M285 549h437v129H285z"/>
                        <text class="note"><tspan x="309" y="581">Daily LVN, SP, FVG</tspan><tspan x="307" y="617">1 long , trend continuation</tspan><tspan x="307" y="643">+10pips</tspan></text>
                    </svg>

                    <!-- renko with vwap bands -->
                    <svg x="347" y="210" width="407" height="250" viewBox="0 0 1221 750">
                        <path fill="#c0c0c0" d="M43 54h753v482H43z"/>
                        <path fill="#dca6a6" d="M43 96h671v17H43z"/>
                        <path fill="#76b4d6" fill-opacity=".8" d="M340 298h374v32H340zM294 334h420v14H294zM514 216h200v18H514zM558 192h156v24H558zM580 170h134v22H580zM624 156h90v14h-90z"/>
                        <path stroke="#4aa6dc" stroke-width="3" d="M600 174h114M580 205h134M540 217h174"/>
                        <path stroke="#999a30" stroke-width="3" d="M64 212h396"/>
                        <path fill="none" stroke="#d633d6" stroke-width="3" d="M88 92l60 4 100 4 60 6 130 2 60 6 222 4"/>
                        <path fill="none" stroke="#333" stroke-width="2" d="M98 230l40-22 60-12 50-12 46-30 30 16 50 3 54-1 20-12h60l50-4 48-16 40-12 32-16 22-38 20-14M98 230q40-10 80-14l60-4 54-10 30 12h100l24-10 60-3 60-8 80-26 40-26 40-10M98 230l60 8 100 3 40 16h120l32-16 80-4 80-10 50-26 54-6M98 230q30 40 60 45l40 12 50 22 40 24 30 12h110l22-24 60-6 204-7M98 230q30 50 60 70l30 12 20 36 40 12M430 376l20-14 100-12 110 4 30 14h24M43 84l34 10 20 140M88 60l10 170M98 230l-22 98-32-6M92 72l4 158-10 130"/>
                        <path fill="none" stroke="#111" stroke-width="3" d="M98 230l20 20 60 8 40 12h50l30 28h126l24-18 90-6 130-10 50-14h16"/>
                        <path fill="none" stroke="#3838e0" stroke-width="2" d="M50 222l40 6h55l40 20 60 34 60 46 36 8 50-6 60-24 80-34 60-8 60-40 63-44"/>
                        <path fill="#4e934e" d="M47 225h13v26H47zM68 220h13v14H68zM310 330h13v26h-13zM332 316h13v20h-13zM354 302h13v24h-13z"/>
                        <path fill="#000" d="M91 228h13v22H91zM112 240h13v22h-13zM134 254h13v22h-13zM486 252h13v26h-13zM706 138h13v18h-13z"/>
                        <path fill="#444" d="M156 268h13v22h-13zM178 282h13v22h-13z"/>
                        <path fill="#f0f" d="M200 295h13v24h-13zM222 309h13v22h-13zM244 322h13v25h-13zM266 336h13v24h-13zM288 350h13v10h-13z"/>
                        <path fill="#0f830f" d="M376 288h13v24h-13zM398 274h13v26h-13zM420 261h13v25h-13zM442 246h13v26h-13zM464 233h13v24h-13zM508 233h13v24h-13zM530 219h13v25h-13zM552 205h13v25h-13zM574 190h13v25h-13zM596 178h13v24h-13z"/>
                        <path fill="#10a5de" d="M618 162h13v25h-13zM640 149h13v24h-13zM662 135h13v25h-13zM684 121h13v25h-13z"/>
                        <path stroke="#e05a5a" stroke-width="2" d="M714 157h34"/>
                        <text class="axis"><tspan x="752" y="77">1.3250</tspan><tspan x="752" dy="35">1.3240</tspan><tspan x="752" dy="35">1.3230</tspan><tspan x="752" dy="35">1.3220</tspan><tspan x="752" dy="35">1.3210</tspan><tspan x="752" dy="34">1.3200</tspan><tspan x="752" dy="35">1.3190</tspan><tspan x="752" dy="35">1.3180</tspan><tspan x="752" dy="35">1.3170</tspan><tspan x="752" y="409">1.3240</tspan><tspan x="752" y="440">1.3220</tspan><tspan x="752" y="472">1.3200</tspan><tspan x="752" y="503">1.3180</tspan><tspan x="720" y="134">2SD</tspan><tspan x="720" y="193">1SD</tspan><tspan x="714" y="252">vwap</tspan><tspan x="720" y="312">1SD</tspan><tspan x="720" y="370">2SD</tspan></text>
                        <rect x="750" y="149" width="46" height="14" fill="#0ee"/>
                        <text class="axis" x="752" y="161">1.3226</text>
                        <path fill="#111" d="M289 55h50v15h-50zM51 520h54v15H51zM129 520h24v15h-24z"/>
                        <path fill="#f22" d="M378 55h69v15h-69z"/>
                        <path fill="#00d000" d="M449 55h73v15h-73zM774 520h20v15h-20z"/>
                        <text class="head"><tspan x="45" y="67">6BU26-CME [CBV][M] Flex Renko 7-3-1 #9</tspan><tspan x="341">T: 475</tspan><tspan x="527">2026-06-19 11:29:50 H: 1.3239 L: 1.3223</tspan></text>
                        <text class="head light"><tspan x="292" y="67">C: 1.3226</tspan><tspan x="381">Chg: -0.0003</tspan><tspan x="452">DChg: 0.0023</tspan></text>
                        <path fill="#fff" d="M46 360h340v14H46z"/>
                        <text class="label" x="48" y="373">Benecci VWAP/ Flex Renko/ Market Depth Levels</text>
                        <text class="head" y="386"><tspan x="45">6BU26-CME [CBV][M] Flex Renko 7-3-1 #9 Heiken-Ashi</tspan><tspan x="358" fill="#0b7a0b">Open: 1.3228 High: 1.3239</tspan><tspan x="508">Low: 1.3223 Last: 1.3226 [Yes]</tspan></text>
                        <path stroke="#0f830f" stroke-width="3" d="M46 465h14M68 463h14M90 461h14M486 469h13M508 469h13M53 458v12M75 457v12M97 453v14M690 410v10M492 462v14M536 457v22"/>
                        <path fill="#000" d="M112 463h13v3h-13zM117 452h3v22h-3zM134 463h13v13h-13zM156 470h13v16h-13zM178 478h13v12h-13zM200 484h13v13h-13zM222 490h13v13h-13zM244 497h13v13h-13zM266 504h13v11h-13zM288 511h13v5h-13zM706 422h13v4h-13zM711 405h2v24h-2z"/>
                        <path fill="#0f830f" d="M332 503h13v13h-13zM354 496h13v14h-13zM376 489h13v14h-13zM398 483h13v14h-13zM420 478h13v12h-13zM442 474h13v9h-13zM464 463h13v16h-13zM530 465h13v4h-13zM552 451h13v16h-13zM574 445h13v14h-13zM596 439h13v14h-13zM618 432h13v13h-13zM640 426h13v13h-13zM662 422h13v11h-13zM684 419h13v10h-13z"/>
                        <path stroke="#7878d8" stroke-width="2" d="M680 477h22"/>
                        <text class="head" y="531"><tspan x="165">4:17:39</tspan><tspan x="231">9:43:26</tspan><tspan x="297">6:27:56</tspan><tspan x="363">6:50:26</tspan><tspan x="429">6:54:39</tspan><tspan x="495">8:17:36</tspan><tspan x="546">9:17</tspan><tspan x="583">9:23:31</tspan><tspan x="649">9:42:02</tspan></text>
                    </svg>
                </svg>
                <div class="reactions">
                    <button class="reaction"><svg><use href="#fire"/></svg>4</button>
                    <button class="reaction"><svg class="pale"><use href="#thumb"/></svg>1</button>
                    <button class="reaction add" aria-label="Add reaction"><svg><use href="#smile"/></svg></button>
                </div>
            </div>
        </article>

        <article class="reply">
            <div class="spine"></div>
            <p>
                <span class="avatar green mini"><svg><use href="#discord"/></svg></span>
                <b>@indigo</b> Buy program active. A lot of absorption at VWAP I entered twice on the long side. I expected a
                <svg class="attachment" viewBox="0 0 28 28" aria-hidden="true"><rect width="28" height="28" rx="5" fill="#3f4046"/><path d="M8 5l2 1 2 1v2l1 2-2 1-1 3-2-1-3 0-1-2 0-2 1-3z" fill="#fff"/><path d="M4 24l5-5 4 3 4-8 7 10z" fill="#fff"/></svg>
            </p>
        </article>
        <div class="scrollbar"></div>
    </main>

    <footer class="composer">
        <button class="round" aria-label="Add attachment">
            <svg viewBox="0 0 42 42"><path d="M21 2v38M2 21h38" stroke="#28292e" stroke-width="4" stroke-linecap="round"/></svg>
        </button>
        <button class="round" aria-label="Apps">
            <svg viewBox="0 0 42 42" fill="#28292e" stroke="#28292e" stroke-linejoin="round">
                <path d="M5 3l12 3-3 11-12-3z" stroke-width="4"/>
                <path d="M32 3l7 13H25z" stroke-width="5"/>
                <path d="M10 25l3 2 4-1 0 4 2 3-2 3 0 4-4 0-3 1-3-1-4 0 0-4-2-3 2-3 0-4 4 1z" stroke-width="2"/>
                <path d="M32 25l3 6 6 2-6 3-3 6-3-6-5-3 5-2z" stroke-width="2"/>
            </svg>
        </button>
        <button class="round" aria-label="Send a gift">
            <svg viewBox="0 0 42 42" fill="#28292e">
                <path d="M20 14c1-8-2-12-7-12-6 0-8 7-4 12M22 14c-1-8 2-12 7-12 6 0 8 7 4 12" fill="none" stroke="#28292e" stroke-width="4"/>
                <path d="M4 12h34q4 0 4 4v4H0v-4q0-4 4-4zM2 24h17v17H6q-4 0-4-4zM23 24h17v13q0 4-4 4H23z"/>
            </svg>
        </button>
        <div class="field">
            <input type="text" placeholder="Message #member-trade-writeup" aria-label="Message #member-trade-writeup">
            <button class="emoji" aria-label="Emoji"><svg><use href="#smile"/></svg></button>
        </div>
        <button class="round" aria-label="Voice message">
            <svg viewBox="0 0 42 42" fill="none" stroke="#28292e" stroke-linecap="round">
                <rect x="13" y="0" width="16" height="25" rx="8" fill="#28292e" stroke="none"/>
                <path d="M6 18c0 20 30 20 30 0" stroke-width="3"/>
                <path d="M21 33v6M15 40h12" stroke-width="4"/>
            </svg>
        </button>
    </footer>
</body>
</html>
```

FILE: styles.css
```css
* {
    box-sizing: border-box;
}
body {
    display: flex;
    flex-direction: column;
    height: 100vh;
    margin: 0;
    background: #fff;
    color: #28292e;
    font-family: "Noto Sans", "Open Sans", sans-serif;
}
h1, h2, p {
    margin: 0;
}
button {
    padding: 0;
    border: none;
    background: none;
    font-family: inherit;
    cursor: pointer;
}
svg {
    display: block;
    flex: none;
}
.sprite {
    position: absolute;
    width: 0;
    height: 0;
}

/* header */
.top {
    flex: none;
    border-bottom: 2px solid #dcdcde;
}
.status {
    display: flex;
    align-items: center;
    justify-content: space-between;
    padding: 28px 66px 0 104px;
}
.clock {
    color: #000;
    font: 600 36px/48px Inter, sans-serif;
}
.status-icons {
    width: 182px;
    height: 32px;
}
.channel-bar {
    display: flex;
    align-items: center;
    padding: 34px 32px 12px 38px;
}
.back svg {
    width: 40px;
    height: 40px;
}
.hash {
    width: 46px;
    height: 46px;
    margin-left: 42px;
}
.channel {
    flex: 1;
    margin-left: 17px;
}
h1 {
    display: flex;
    align-items: center;
    gap: 12px;
    color: #060607;
    font-size: 38px;
    font-weight: 700;
    line-height: 48px;
}
h1 svg {
    width: 14px;
    height: 24px;
}
.online {
    display: flex;
    align-items: center;
    gap: 8px;
    color: #5c5d66;
    font-size: 24px;
    line-height: 42px;
}
.dot {
    width: 17px;
    height: 17px;
    border-radius: 50%;
    background: #24934c;
}
.search {
    display: grid;
    place-items: center;
    width: 67px;
    height: 67px;
    border-radius: 50%;
    background: #ebebeb;
}
.search svg {
    width: 34px;
    height: 34px;
}

/* messages */
.chat {
    position: relative;
    flex: 1;
    min-height: 0;
    overflow: hidden;
}
.message {
    display: flex;
    gap: 25px;
    padding: 0 25px;
    margin-bottom: 42px;
}
.message .body:first-child {
    margin-left: 108px;
}
.body {
    flex: 1;
    min-width: 0;
}
.avatar {
    display: grid;
    flex: none;
    place-items: center;
    width: 83px;
    height: 83px;
    border-radius: 50%;
}
.avatar svg {
    width: 50px;
    height: 50px;
}
.red {
    background: #ed4245;
}
.green {
    background: #3ba55c;
}
h2 {
    color: #060607;
    font-size: 31px;
    font-weight: 600;
    line-height: 46px;
}
time {
    margin-left: 8px;
    color: #5c5d66;
    font-size: 24px;
    font-weight: 400;
    line-height: 24px;
}
.message p {
    margin-bottom: 9px;
    font-size: 33px;
    font-weight: 300;
    line-height: 46px;
}
.file {
    display: flex;
    align-items: center;
    gap: 19px;
    height: 118px;
    padding: 0 21px;
    border: 2px solid #e6e6e9;
    border-radius: 17px;
}
.file svg {
    width: 68px;
    height: 68px;
}
.file a {
    display: block;
    color: #0068ca;
    font-size: 25px;
    line-height: 34px;
    text-decoration: none;
}
.file span {
    display: block;
    font-size: 18px;
    line-height: 28px;
}
.reactions {
    display: flex;
    gap: 8px;
    margin-top: 13px;
}
.reaction {
    display: flex;
    align-items: center;
    gap: 9px;
    height: 62px;
    padding: 0 14px;
    border-radius: 17px;
    background: #e0e1e5;
    color: #5c5d66;
    font: 600 28px/62px Inter, sans-serif;
}
.reaction svg {
    width: 42px;
    height: 44px;
}
.reaction.add {
    padding: 0 18px;
}
.reaction.add svg {
    width: 34px;
    height: 34px;
}
.yellow {
    color: #fcc93c;
}
.pale {
    color: #f9dcc1;
}
.hundred-digits {
    fill: #e0100c;
    font: italic 700 23px "Liberation Sans", sans-serif;
}
.bag-sign {
    fill: #40341a;
    font: 700 22px "Liberation Sans", sans-serif;
    text-anchor: middle;
}

/* chart screenshots */
.shot {
    width: 100%;
    height: auto;
    border-radius: 34px;
}
.shot-cut {
    border-radius: 0 0 34px 34px;
}
.shot text {
    font: 11px "DejaVu Sans Mono", monospace;
    white-space: pre;
}
.shot .caption {
    fill: #fff;
    font-size: 15px;
    font-weight: 700;
}
.shot .note {
    fill: #222;
    font-size: 22px;
    font-weight: 700;
}
.shot .tick {
    fill: #b8b8b8;
}
.shot .dark {
    fill: #333;
}
.shot .cyan {
    fill: #22b8c0;
}
.shot .axis {
    fill: #333;
    font-size: 13px;
}
.shot .light {
    fill: #e8e8e8;
}
.shot .plum {
    fill: #5c1560;
}
.shot .head {
    fill: #222;
    font: 13px "Liberation Serif", serif;
}
.shot .head.light {
    fill: #fff;
}
.shot .label {
    fill: #6b1f1f;
    font: 700 14px "Liberation Sans", sans-serif;
}
.shot .t-grn text {
    fill: #00c814;
    font-size: 15px;
    font-weight: 700;
}
.shot .t-red, .shot .t-red text {
    fill: #d01414;
    font-size: 15px;
    font-weight: 700;
}
.shot .t-yel, .shot .t-yel text {
    fill: #b8ac6a;
}
.shot .t-single text {
    fill: #f04040;
    font-size: 13px;
}
.wire {
    fill: none;
    stroke: #777;
    stroke-width: 2;
}
.digits {
    stroke: #b4b4b4;
    stroke-width: 8;
    stroke-dasharray: 5 3;
}
.c-green {
    stroke: #12d92e;
    stroke-width: 10;
}
.c-cyan {
    stroke: #1f9b9e;
    stroke-width: 10;
}
.c-red {
    stroke: #f52a2a;
    stroke-width: 8;
}
.c-mag {
    stroke: #8e1a8e;
    stroke-width: 4;
}
.tpo-pale, .tpo {
    stroke: #c77fc9;
    stroke-width: 5;
}
.tpo {
    stroke: #cc3ace;
}
.thin {
    stroke-width: 1;
}
.small {
    stroke-width: 3;
    stroke-dasharray: 2 1;
}

/* quoted reply */
.reply {
    display: flex;
    padding: 0 25px 0 64px;
}
.spine {
    flex: none;
    width: 62px;
    height: 80px;
    margin: 18px 7px 0 0;
    border-top: 5px solid #71727c;
    border-left: 5px solid #71727c;
    border-top-left-radius: 14px;
}
.reply p {
    flex: 1;
    color: #44454d;
    font-size: 27px;
    font-weight: 300;
    line-height: 38px;
}
.reply b {
    margin-right: 4px;
    color: #060607;
    font-size: 28px;
    font-weight: 600;
}
.mini {
    display: inline-grid;
    width: 37px;
    height: 37px;
    vertical-align: -7px;
}
.mini svg {
    width: 23px;
    height: 23px;
}
.attachment {
    display: inline-block;
    width: 28px;
    height: 28px;
    margin-left: 36px;
    vertical-align: -1px;
}
.scrollbar {
    position: absolute;
    right: 6px;
    bottom: 70px;
    width: 7px;
    height: 172px;
    border-radius: 4px;
    background: #a5a5a5;
}

/* message box */
.composer {
    display: flex;
    flex: none;
    gap: 16px;
    padding: 17px 25px 87px;
    border-top: 2px solid #e6e6e9;
}
.round {
    display: grid;
    flex: none;
    place-items: center;
    width: 83px;
    height: 83px;
    border-radius: 50%;
    background: #ebebeb;
}
.round svg {
    width: 42px;
    height: 42px;
}
.field {
    display: flex;
    flex: 1;
    align-items: center;
    gap: 8px;
    min-width: 0;
    padding: 0 18px 0 29px;
    border-radius: 42px;
    background: #ebebeb;
}
.field input {
    flex: 1;
    min-width: 0;
    padding: 0;
    border: none;
    outline: none;
    background: none;
    color: #323339;
    font: 300 33px/46px "Noto Sans", sans-serif;
    text-overflow: ellipsis;
}
.field input::placeholder {
    color: #5c5d66;
    opacity: 1;
}
.emoji svg {
    width: 46px;
    height: 46px;
}
```
